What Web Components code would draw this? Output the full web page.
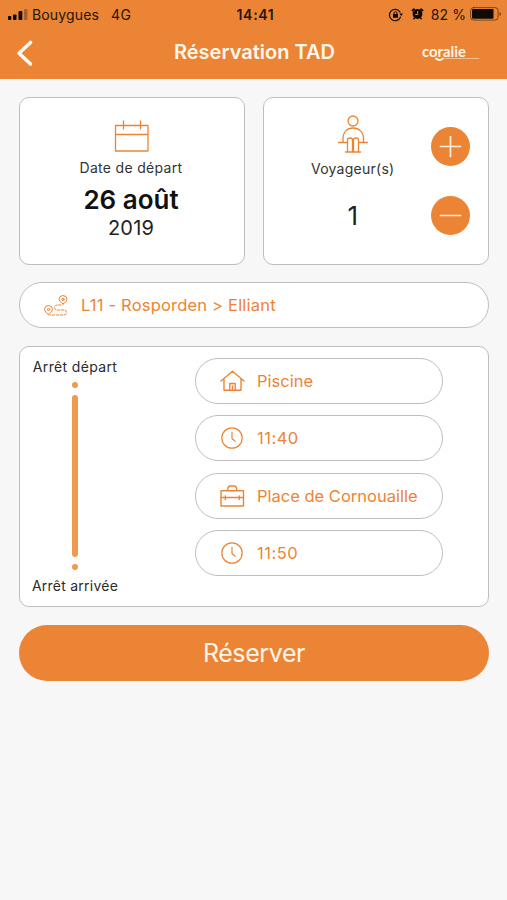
<!DOCTYPE html>
<html lang="fr">
<head>
<meta charset="utf-8">
<title>Réservation TAD</title>
<style>
  html, body {
    margin: 0;
    height: 100%;
    overflow: hidden;
    background: #f7f7f7;
  }

  body {
    --accent: #eb8535;
    --line: #bebebe;
    font-family: Inter, "Liberation Sans", sans-serif;
    color: #333;
  }
</style>
</head>
<body>
<booking-page></booking-page>

<script>
const ICONS = {
  back: '<path d="M14.500 2.500 3 13.200 14.500 24" stroke-width="3.600"/>',
  calendar: '<path d="M1.500 5.500H34V31H1.500Z M1.500 14.500H34 M9.500 1V9 M26.500 1V9" stroke-width="1.300"/>',
  traveller: `<g stroke-width="1.300"><circle cx="15" cy="6" r="5"/>
    <path d="M.5 27.500H5 M25 27.500H29.500 M5 27.500V24C5 17 9 13 15 13S25.500 17 25.500 24V27.500 M5 27.500H9
      M21 27.500H25.500 M7.500 37H22.500 M9.500 37V25Q9.500 23 12 23T14.500 25V37 M15.500 37V25Q15.500 23 18 23T20.500 25V37"/></g>`,
  plus: '<path d="M10.500 .5V20.500 M.5 10.500H20.500" stroke-width="1.700"/>',
  minus: '<path d="M.5 10.500H20.500" stroke-width="1.700"/>',
  route: `<g stroke-width="1"><path d="M19 9Q15 6.500 15 4.500A4 4 0 0 1 23 4.500Q23 6.500 19 9Z"/><circle cx="19" cy="4.500" r="1.200"/>
    <path d="M4.500 19.500Q.5 17 .5 14.500A4 4 0 0 1 8.500 14.500Q8.500 17 4.500 19.500Z"/><circle cx="4.500" cy="14.500" r="1.200"/>
    <path d="M17 10H13Q10.500 10 10.500 12.500T13 15H20Q22.500 15 22.500 17.500T20 20H6" stroke-dasharray="2.500 1.500"/></g>`,
  home: '<path d="M1 11 12.500 1.200 24 11 M4 9V20.300H21V9 M9.800 20V13.500H15.200V20 M12.500 16V20" stroke-width="1.400"/>',
  clock: '<circle cx="12" cy="11" r="10.200" stroke-width="1.200"/><path d="M12 5V11.500L15.200 14.200" stroke-width="1.200"/>',
  briefcase: '<path d="M1 5.800H23.500V21H1Z M1 12.500H4 M6.500 12.500H18 M20.500 12.500H23.500 M5.300 11V14.500 M19.200 11V14.500 M7.800 5.500V4.500Q7.800 1 10.500 1H14Q16.700 1 16.700 4.500V5.500" stroke-width="1.400"/>',
  signal: '<g fill="currentColor" stroke="none"><rect y="7" width="3.300" height="4" rx=".8"/><rect x="5" y="5.500" width="3.500" height="5.500" rx=".8"/><rect x="10.500" y="2" width="3.800" height="9" rx=".8"/><rect x="16" width="3.500" height="11" rx=".8" opacity=".3"/></g>',
  lock: '<path d="M11 4A5.700 5.700 0 1 0 11.500 9" stroke-width="1.200"/><path d="M10.300 5.500H14L12.200 8Z M4 6H9V9.700H4Z" fill="currentColor" stroke="none"/><path d="M5 6.500V5Q5 3.700 6.500 3.700T8 5V6.500" stroke-width="1"/>',
  alarm: '<circle cx="6.500" cy="7" r="4.900" fill="currentColor" stroke="none"/><path d="M1.500 3.500 3 2.300 M11.500 3.500 10 2.300" stroke-width="2"/><path d="M3.500 11 2.800 11.800 M9.500 11 10.200 11.800" stroke-width="1.400"/><path d="M6.700 4.500V7.500H4.600" stroke="#eb8535" stroke-width="1"/>',
  battery: '<rect x=".6" y=".6" width="27.500" height="12.500" rx="3" stroke-width="1" opacity=".5"/><rect x="2" y="2" width="21.500" height="9.700" rx="1.200" fill="currentColor" stroke="none"/><path d="M29.500 5V9Q31 8.500 31 7T29.500 5Z" fill="currentColor" stroke="none" opacity=".55"/>'
};

function define(name, markup) {
  customElements.define(name, class extends HTMLElement {
    constructor() {
      super();
      this.attachShadow({ mode: 'open' }).innerHTML = markup;
    }
  });
}

class LineIcon extends HTMLElement {
  constructor() {
    super();
    this.attachShadow({ mode: 'open' });
  }

  connectedCallback() {
    const w = this.getAttribute('w');
    const h = this.getAttribute('h');
    this.shadowRoot.innerHTML = `
      <style>
        :host { display: block; flex: none; width: ${w}px; height: ${h}px; }
        svg { display: block; overflow: visible; }
      </style>
      <svg width="${w}" height="${h}" viewBox="0 0 ${w} ${h}" fill="none" stroke="currentColor"
           stroke-linecap="round" stroke-linejoin="round">${ICONS[this.getAttribute('name')]}</svg>
    `;
  }
}

customElements.define('line-icon', LineIcon);

define('status-bar', `
  <style>
    :host {
      display: grid;
      grid-template-columns: 1fr auto 1fr;
      align-items: center;
      height: 28px;
      padding: 0 6px 0 8px;
      box-sizing: border-box;
      font-size: 14px;
      color: #24150b;
    }
    div { display: flex; align-items: center; }
    .carrier { letter-spacing: .15px; margin-left: 5px; }
    .net { margin-left: 12px; letter-spacing: .3px; }
    .time { font-weight: 600; letter-spacing: .7px; margin-left: 2px; }
    .right { justify-content: flex-end; }
    .level { margin: 0 4px 0 7px; letter-spacing: .1px; }
    line-icon { color: #100a05; }
  </style>
  <div><line-icon name="signal" w="19" h="11"></line-icon><span class="carrier">Bouygues</span><span class="net">4G</span></div>
  <div class="time">14:41</div>
  <div class="right">
    <line-icon name="lock" w="14" h="13"></line-icon>
    <line-icon name="alarm" w="13" h="14" style="margin-left: 8px"></line-icon>
    <span class="level">82 %</span>
    <line-icon name="battery" w="31" h="14"></line-icon>
  </div>
`);

define('brand-logo', `
  <style>
    :host { display: block; width: 60px; height: 20px; color: #fff3e4; }
    svg { display: block; overflow: visible; }
    text { font: 700 14.500px Lato, sans-serif; }
  </style>
  <svg width="60" height="20" viewBox="0 0 60 20" fill="none" stroke="currentColor" stroke-linecap="round">
    <text x="1" y="12.500" textLength="44" lengthAdjust="spacingAndGlyphs" fill="currentColor" stroke="none">coralie</text>
    <path d="M15 14.500Q18.500 17.500 22 14.500" stroke-width="1.700"/>
    <path d="M24 14.500H58" stroke-width="1.200" opacity=".5"/>
  </svg>
`);

define('nav-bar', `
  <style>
    :host {
      display: grid;
      grid-template-columns: 158px 1fr auto;
      align-items: center;
      height: 51px;
      padding: 0 26px 0 16px;
      box-sizing: border-box;
      color: #fff7ee;
    }
    h1 { margin: 0 0 3px; font-size: 20px; font-weight: 600; line-height: 24px; }
  </style>
  <line-icon name="back" w="17" h="27"></line-icon>
  <h1><slot></slot></h1>
  <brand-logo></brand-logo>
`);

define('info-card', `
  <style>
    :host {
      display: block;
      box-sizing: border-box;
      background: #fff;
      border: 1px solid var(--line);
      border-radius: 10px;
    }
  </style>
  <slot></slot>
`);

define('date-picker', `
  <style>
    :host { display: flex; flex-direction: column; align-items: center; padding-top: 22px; margin-right: 2px; }
    line-icon { color: var(--accent); }
    .label { margin-top: 7px; font-size: 14px; line-height: 18px; letter-spacing: .32px; }
    .day { margin-top: 8px; font-size: 26px; line-height: 30px; font-weight: 600; color: #111; }
    .year { font-size: 20px; line-height: 26px; color: #222; letter-spacing: .2px; }
  </style>
  <line-icon name="calendar" w="35" h="32"></line-icon>
  <div class="label">Date de départ</div>
  <div class="day">26 août</div>
  <div class="year">2019</div>
`);

define('round-button', `
  <style>
    :host { display: block; }
    button {
      display: flex;
      align-items: center;
      justify-content: center;
      width: 39px;
      height: 39px;
      padding: 0;
      border: 0;
      border-radius: 50%;
      background: var(--accent);
      color: #ffeedc;
    }
  </style>
  <button><slot></slot></button>
`);

define('traveller-counter', `
  <style>
    :host { display: flex; justify-content: space-between; padding: 17px 18px 0 47px; }
    .count, .buttons { display: flex; flex-direction: column; align-items: center; }
    .count line-icon { color: var(--accent); }
    .label { margin-top: 7px; font-size: 14px; line-height: 18px; letter-spacing: .25px; }
    .value { margin-top: 23px; font-size: 26px; line-height: 30px; color: #222; }
    .buttons { gap: 30px; padding-top: 12px; }
  </style>
  <div class="count">
    <line-icon name="traveller" w="30" h="38"></line-icon>
    <div class="label">Voyageur(s)</div>
    <div class="value">1</div>
  </div>
  <div class="buttons">
    <round-button><line-icon name="plus" w="21" h="21"></line-icon></round-button>
    <round-button><line-icon name="minus" w="21" h="21"></line-icon></round-button>
  </div>
`);

define('pill-field', `
  <style>
    :host {
      display: flex;
      align-items: center;
      gap: 12px;
      height: 46px;
      padding: 0 24px;
      box-sizing: border-box;
      background: #fff;
      border: 1px solid var(--line);
      border-radius: 23px;
      color: var(--accent);
      font-size: 16.500px;
      line-height: 20px;
      white-space: nowrap;
    }
  </style>
  <slot name="icon"></slot>
  <span><slot></slot></span>
`);

define('trip-line', `
  <style>
    :host { display: flex; flex-direction: column; align-items: center; width: 84px; font-size: 14px; line-height: 18px; white-space: nowrap; color: #2b2b2b; }
    i { display: block; width: 6px; background: #f09a4f; border-radius: 3px; }
    .dot { height: 6px; }
    .bar { height: 162px; margin: 7px 0; }
    .from { margin-bottom: 6px; letter-spacing: .35px; }
    .to { margin-top: 7px; letter-spacing: .25px; }
  </style>
  <div class="from">Arrêt départ</div>
  <i class="dot"></i><i class="bar"></i><i class="dot"></i>
  <div class="to">Arrêt arrivée</div>
`);

define('submit-button', `
  <style>
    :host { display: block; }
    button {
      display: block;
      width: 100%;
      height: 56px;
      padding: 0;
      border: 0;
      border-radius: 28px;
      background: var(--accent);
      color: #fff4e8;
      font: 25px/57px Inter, "Liberation Sans", sans-serif;
      letter-spacing: -.4px;
    }
  </style>
  <button><slot></slot></button>
`);

define('booking-page', `
  <style>
    :host { display: block; }
    header { background: var(--accent); }
    main { display: flex; flex-direction: column; padding: 18px 18px 0 19px; }
    .cards { display: grid; grid-template-columns: 226px 226px; gap: 18px; }
    .cards info-card { height: 168px; }
    .line { margin-top: 17px; letter-spacing: .2px; }
    .trip { height: 261px; margin-top: 18px; }
    .row { display: flex; padding: 11px 13px; }
    .stops { display: grid; align-content: start; gap: 11.400px; width: 248px; margin-left: 78px; }
    .time { letter-spacing: .5px; }
    submit-button { margin-top: 18px; }
  </style>
  <header>
    <status-bar></status-bar>
    <nav-bar>Réservation TAD</nav-bar>
  </header>
  <main>
    <div class="cards">
      <info-card><date-picker></date-picker></info-card>
      <info-card><traveller-counter></traveller-counter></info-card>
    </div>
    <pill-field class="line"><line-icon slot="icon" name="route" w="25" h="21"></line-icon>L11 - Rosporden &gt; Elliant</pill-field>
    <info-card class="trip">
      <div class="row">
        <trip-line></trip-line>
        <div class="stops">
          <pill-field><line-icon slot="icon" name="home" w="25" h="22"></line-icon>Piscine</pill-field>
          <pill-field class="time"><line-icon slot="icon" name="clock" w="25" h="22"></line-icon>11:40</pill-field>
          <pill-field><line-icon slot="icon" name="briefcase" w="25" h="22"></line-icon>Place de Cornouaille</pill-field>
          <pill-field class="time"><line-icon slot="icon" name="clock" w="25" h="22"></line-icon>11:50</pill-field>
        </div>
      </div>
    </info-card>
    <submit-button>Réserver</submit-button>
  </main>
`);
</script>
</body>
</html>
